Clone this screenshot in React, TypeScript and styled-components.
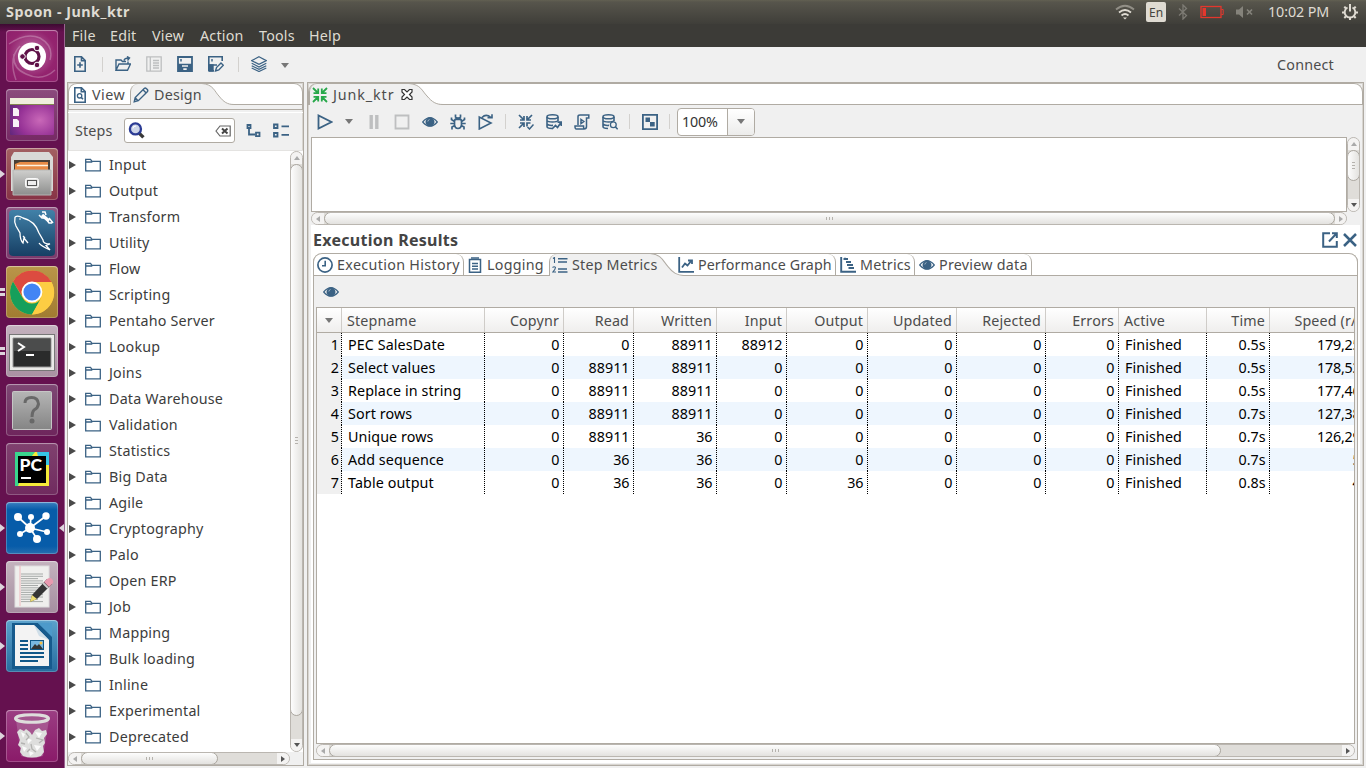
import React from "react";
import styled, { createGlobalStyle, css } from "styled-components";

const ink = "#3b6284";
const line = "#b0aba3";
const face = "#f0f0f0";

const Global = createGlobalStyle`
  *, *::before, *::after { box-sizing: border-box; }
  html, body { margin: 0; height: 100%; overflow: hidden; }
  body { font-family: "Noto Sans", "Open Sans", sans-serif; font-size: 14.3px; line-height: 20px; color: #4c4c4c; background: ${face}; }
`;

const Desktop = styled.div`
  width: 1366px; height: 768px; display: flex; flex-direction: column; overflow: hidden; white-space: nowrap;
`;
const TopBar = styled.header`
  height: 24px; flex: none; display: flex; align-items: center; justify-content: space-between;
  padding: 0 8px 0 6px; color: #dfdbd2; background: linear-gradient(#626052 0, #57554c 2px, #3f3e39 100%);
`;
const Title = styled.div`font-size: 14.3px; font-weight: 700; letter-spacing: 0.52px;`;
const Indicators = styled.div`display: flex; align-items: center; height: 24px;`;
const Lang = styled.span`
  width: 20px; height: 20px; margin: 0 11px; border-radius: 2px; background: #dfdbd2; color: #44433d;
  font-size: 12px; line-height: 21px; text-align: center;
`;
const Clock = styled.span`margin: 0 12px 0 14px; letter-spacing: -0.1px; width: 62px;`;
const Body = styled.div`flex: 1; display: flex; min-height: 0;`;

const Launcher = styled.nav`
  width: 65px; flex: none; display: flex; flex-direction: column; gap: 7px; padding: 6px 0 6px 6px;
  background: linear-gradient(#3d0a32 0, #62104f00 8px), #65114f; border-right: 1px solid #9a6390;
`;
const Tile = styled.div<{ $bg: string; $bottom?: boolean; $marks?: number; $active?: boolean }>`
  position: relative; width: 52px; height: 52px; flex: none; border-radius: 4px; background: ${p => p.$bg};
  box-shadow: inset 0 0 0 1px rgba(255,255,255,.22), inset 0 1px 1px rgba(255,255,255,.3);
  margin-top: ${p => (p.$bottom ? "auto" : 0)};
  & > svg { display: block; width: 52px; height: 52px; }
  ${p => p.$marks === 1 && css`
    &::before { content: ""; position: absolute; left: -6px; top: 22px; border: 4px solid transparent; border-left: 5px solid #ddd5dc; border-right: 0; }
  `}
  ${p => p.$marks === 2 && css`
    &::before { content: ""; position: absolute; left: -6px; top: 22px; width: 5px; height: 8px; border: solid #ddd5dc; border-width: 3px 0; }
  `}
  ${p => p.$active && css`
    &::after { content: ""; position: absolute; right: -6px; top: 22px; border: 4px solid transparent; border-right: 5px solid #ddd5dc; border-left: 0; }
  `}
`;

const Window = styled.div`flex: 1; min-width: 0; display: flex; flex-direction: column; background: ${face};`;
const MenuBar = styled.div`
  height: 23px; flex: none; display: flex; gap: 15px; padding: 2px 0 0 7px; background: #3c3b37; color: #dfdbd2; letter-spacing: 0.2px;
`;
const MenuItem = styled.span<{ $w: number }>`width: ${p => p.$w}px;`;
const MainTools = styled.div`height: 35px; flex: none; display: flex; align-items: center; padding: 0 32px 1px 7px;`;
const Connect = styled.span`margin-left: auto; letter-spacing: 0.22px; padding-top: 1px;`;
const Sep = styled.i<{ $m?: string }>`width: 1px; height: 15px; margin: ${p => p.$m || "0 12px"}; background: #d3d1ce; flex: none;`;
const Caret = styled.i<{ $m?: string }>`
  border: 4px solid transparent; border-top: 5px solid #777; border-bottom: 0; margin: ${p => p.$m || 0}; flex: none;
`;
const Gap = styled.i<{ $w: number }>`width: ${p => p.$w}px; flex: none;`;
const Panels = styled.div`flex: 1; min-height: 0; display: flex; gap: 3px; padding: 0 2px 2px 2px;`;
const Pane = styled.section<{ $w?: number }>`
  ${p => (p.$w ? css`width: ${p.$w}px; flex: none;` : css`flex: 1; min-width: 0;`)}
  display: flex; flex-direction: column; border: 1px solid ${line}; box-shadow: inset 0 0 0 1px #d8d5d0; background: ${face};
`;
const Strip = styled.div<{ $h?: number }>`
  height: ${p => p.$h || 22}px; flex: none; display: flex; background: #fff; border: 1px solid ${line}; border-radius: 9px 9px 0 0; border-bottom: 0;
  box-shadow: inset 0 -1px 0 ${line};
`;
const Tab = styled.div<{ $w: number; $pl?: number; $gap?: number; $on?: boolean; $edge?: boolean; $track?: number }>`
  width: ${p => p.$w}px; padding-left: ${p => p.$pl ?? 4}px; gap: ${p => p.$gap ?? 4}px; letter-spacing: ${p => p.$track ?? 0.2}px;
  height: 100%; flex: none; display: flex; align-items: center; position: relative;
  & > span { position: relative; z-index: 1; }
  ${p => p.$on && css`background: ${face}; border-left: 1px solid ${line}; border-radius: 8px 0 0 0;`}
  ${p => p.$edge && css`border-right: 1px solid ${line}; border-radius: 0 8px 0 0;`}
`;
const SlopeSvg = styled.svg<{ $back?: number }>`flex: none; display: block; margin-right: ${p => -(p.$back || 0)}px;`;
const Slope = ({ back, w = 34, h = 21 }: { back?: number; w?: number; h?: number }) => (
  <SlopeSvg $back={back} width={w} height={h} viewBox="0 0 34 21" preserveAspectRatio="none">
    <path d="M0 0C12 1 13 7 18 12C23 18 27 20.5 34 20.5V21H0Z" fill={face} />
    <path d="M0 -.5C12 .5 13 7 18 12C23 18 27 20.5 34 20.5" fill="none" stroke={line} />
  </SlopeSvg>
);

const Band = styled.div`height: 5px; flex: none; border: solid ${line}; border-width: 0 1px 1px; margin-bottom: 2px;`;
const StepsBar = styled.div`
  height: 39px; flex: none; display: flex; align-items: center; padding: 0 0 2px 7px; border-top: 1px solid #fff; border-bottom: 1px solid #e4e3e1;
`;
const StepsLabel = styled.span`width: 38px; letter-spacing: 0.15px;`;
const Search = styled.div`
  width: 111px; height: 25px; margin: 0 11px 0 11px; padding: 0 3px 0 3px; display: flex; align-items: center; justify-content: space-between;
  background: #fff; border: 1px solid ${line}; border-radius: 3px;
`;
const TreeArea = styled.div`flex: 1; min-height: 0; display: flex; background: #fff;`;
const Tree = styled.ul`list-style: none; margin: 0; padding: 1px 0 0; flex: 1; min-width: 0; overflow: hidden;`;
const TreeRow = styled.li`height: 26px; display: flex; align-items: center; color: #3c3c3c; letter-spacing: 0.2px;`;
const Twist = styled.i`border: 4px solid transparent; border-left: 7px solid #4a4a4a; border-right: 0; margin-left: 1px;`;
const Foot = styled.div`height: 13px; flex: none; display: flex; background: ${face}; padding-right: 13px;`;

const ScrollBox = styled.div<{ $v?: boolean }>`
  display: flex; flex: ${p => (p.$v ? "none" : 1)}; ${p => (p.$v ? css`width: 13px; flex-direction: column;` : css`height: 13px;`)}
  background: #dfddd9; border: 1px solid #bab6b0; border-radius: 7px; overflow: hidden;
`;
const Cap = styled.i<{ $v?: boolean; $dim?: boolean; $dir: string }>`
  flex: none; width: ${p => (p.$v ? 11 : 12)}px; height: ${p => (p.$v ? 12 : 11)}px; background: #f4f3f2;
  display: flex; align-items: center; justify-content: center;
  &::after {
    content: ""; border: 3px solid transparent;
    ${p => `border-${p.$dir}: 4px solid ${p.$dim ? "#aaa" : "#555"}; border-${({ left: "right", right: "left", top: "bottom", bottom: "top" } as Record<string, string>)[p.$dir]}: 0;`}
  }
`;
const Thumb = styled.i<{ $v?: boolean; $len: number }>`
  flex: none; display: flex; align-items: center; justify-content: center; border: 1px solid #aaa69f; border-radius: 7px;
  ${p => p.$v
    ? css`width: 13px; margin-left: -1px; height: ${p.$len}px; background: linear-gradient(90deg, #fdfdfd, #e3e2df);`
    : css`height: 13px; margin-top: -1px; width: ${p.$len}px; background: linear-gradient(#fdfdfd, #e3e2df);`}
  &::after {
    content: ""; ${p => (p.$v ? css`width: 3px; height: 7px;` : css`width: 7px; height: 3px;`)}
    background: repeating-linear-gradient(${p => (p.$v ? "180deg" : "90deg")}, #b5b2ad 0 1px, transparent 1px 3px);
  }
`;
const Space = styled.i`flex: 1;`;
const Scroll = ({ v, len, dimEnd }: { v?: boolean; len: number; dimEnd?: boolean }) => (
  <ScrollBox $v={v}>
    <Cap $v={v} $dim $dir={v ? "bottom" : "right"} />
    <Thumb $v={v} $len={len} />
    <Space />
    <Cap $v={v} $dim={dimEnd} $dir={v ? "top" : "left"} />
  </ScrollBox>
);

const EditTools = styled.div`height: 32px; flex: none; display: flex; align-items: center; padding: 1px 0 0 9px;`;
const Combo = styled.div`
  display: flex; width: 78px; height: 28px; border: 1px solid ${line}; border-radius: 4px; background: #fff; color: #333; overflow: hidden;
  & > span { width: 50px; padding: 3px 0 0 4px; border-right: 1px solid ${line}; letter-spacing: -0.2px; }
`;
const ComboButton = styled.div`flex: 1; display: flex; align-items: center; justify-content: center; background: linear-gradient(#fff, #ececeb);`;
const CanvasRow = styled.div`display: flex; height: 75px; flex: none; padding: 0 3px 0 3px;`;
const Canvas = styled.div`flex: 1; background: #fff; border: 1px solid ${line};`;
const CanvasFoot = styled.div`display: flex; height: 13px; flex: none; padding: 0 16px 0 3px;`;
const Results = styled.div`flex: 1; min-height: 0; margin: 0 3px 2px 3px; padding: 0 2px 3px; background: #fff; display: flex; flex-direction: column;`;
const ResultsHead = styled.div`height: 28px; flex: none; display: flex; align-items: center; padding-top: 2px;`;
const Heading = styled.h2`margin: 0; font-size: 16px; font-weight: 700; color: #444; flex: 1; letter-spacing: 0.28px;`;
const Folder = styled.div`flex: 1; min-height: 0; display: flex; flex-direction: column; background: ${face}; border: 1px solid ${line}; border-top: 0; border-radius: 9px 9px 0 0;`;
const FolderStrip = styled(Strip)`margin: 0 -1px;`;
const ResultTools = styled.div`height: 31px; flex: none; padding: 8px 0 0 9px;`;
const TableBox = styled.div`flex: 1; min-height: 0; margin: 0 2px 0 2px; display: flex; flex-direction: column; overflow: hidden; border: 1px solid ${line}; border-bottom: 0; background: #fff;`;
const cols = "25px 143px 79px 70px 83px 70px 81px 89px 89px 73px 88px 63px 103px";
const HeadRow = styled.div`
  display: grid; grid-template-columns: ${cols}; height: 25px; flex: none; background: linear-gradient(#fff, #efeeed); border-bottom: 1px solid ${line};
`;
const HeadCell = styled.div<{ $left?: boolean }>`
  border-right: 1px solid #cfccc8; padding: 3px 4px 0 5px; text-align: ${p => (p.$left ? "left" : "right")}; letter-spacing: 0.15px;
`;
const Sorter = styled.div`display: flex; align-items: center; justify-content: center; border-right: 1px solid #cfccc8;`;
const Row = styled.div<{ $alt: boolean }>`
  display: grid; grid-template-columns: ${cols}; height: 23px; flex: none; background: ${p => (p.$alt ? "#eef6fe" : "#fff")}; color: #000;
`;
const Cell = styled.div<{ $left?: boolean; $no?: boolean }>`
  padding: 2px 4.5px 0 6px; text-align: ${p => (p.$left ? "left" : "right")}; letter-spacing: ${p => (p.$left ? 0.1 : 0)}px;
  ${p => p.$no && css`background-color: #f0f0f0; padding-right: 3px;`}
  background-image: repeating-linear-gradient(#000 0 1px, transparent 1px 2px); background-size: 1px 100%; background-position: right; background-repeat: no-repeat;
  &:last-child { letter-spacing: -0.2px; }
`;
const TableFoot = styled.div`height: 16px; flex: none; display: flex; background: ${face}; margin: 0 2px; padding-bottom: 2px; border-top: 1px solid ${line};`;

const Glyph = styled.svg`flex: none; display: block; fill: none; stroke: ${ink}; stroke-width: 1.6;`;
const Ico = ({ n, s = 16 }: { n: string; s?: number }) => (
  <Glyph width={s} height={s} viewBox="0 0 16 16">{icons[n]}</Glyph>
);
const dbTop = <><ellipse cx="6.5" cy="2.8" rx="5.5" ry="2" /><path d="M1 3V12.5C1 14 4 14.5 6 14.5M12 3V7M1 6.5C2 8.5 11 8.5 12 6.5M1 10C2 11.4 5 11.6 7 11.4" /></>;
const icons: Record<string, React.ReactNode> = {
  file: <path d="M2.8 .8H9.5L13.2 4.5V15.2H2.8ZM9.5 1V4.8H13M8 6.2V11.8M5.2 9H10.8" />,
  fileSearch: <><path d="M2.8 .8H9.5L13.2 4.5V15.2H2.8ZM9.3 1V4.8H13" /><circle cx="7.6" cy="8.8" r="2.2" strokeWidth="1.3" /><path d="M9.2 10.4L11 12.2" /></>,
  open: <path d="M1 14V4H6L7.5 5.5H11M1 14.2L4 8H15.5L12.5 14.2ZM13 7.5V5.5M9 4.5Q9.5 2 14 2M12 .5L14.5 2L12.5 4.5" strokeWidth="1.4" />,
  list: <g stroke="#bdbfc0"><path d="M.8 .8H15.2V15.2H.8ZM4.3 1V15M7 4.5H13M7 7H13M7 9.5H13M7 12H13" strokeWidth="1.3" /></g>,
  save: <><path d="M1 1H15V15H1Z" strokeWidth="1.8" /><path d="M1 8.5H15M5.5 15V11.5H10.5V15" strokeWidth="1.6" /><path d="M4 3V5.5" strokeWidth="1.5" /><path d="M1 9H5V15H1ZM11 9H15V15H11Z" fill={ink} stroke="none" /></>,
  saveEdit: <><path d="M14.2 5V.8H.8V14.8H6M1 9H9" /><path d="M4 3V5.5M1 9H5V15H1" fill={ink} strokeWidth="1.4" /><path d="M7.5 15L8.5 11.5L13 7L15.3 9.2L10.8 14Z" strokeWidth="1.4" /></>,
  layers: <g strokeWidth="1.2"><path d="M8 .8L15.3 4.6L8 8.4L.7 4.6ZM.7 7.2L8 11L15.3 7.2M.7 9.8L8 13.4L15.3 9.8M.7 12L8 15.5L15.3 12" /></g>,
  pencil: <path d="M1.2 14.8L2.2 10.5L11.2 1.5Q12.3 .6 13.5 1.7L14.3 2.5Q15.3 3.8 14.3 4.8L5.3 13.7ZM2.2 10.8L5 13.7M10 2.8L13.2 6" strokeWidth="1.4" />,
  folder: <path d="M.7 13.8V2.3H5.5L7 4.3H15.3V13.8ZM1 5H7.3" strokeWidth="1.3" />,
  tree: <path d="M1.5 2H4.5V5H1.5ZM3 5V11.5H9M10 9.7H13.5V13.2H10Z" strokeWidth="1.8" />,
  rows: <path d="M1 1.5H4.5V5H1ZM1 10H4.5V13.5H1ZM8.5 3.3H16M8.5 11.8H16" strokeWidth="1.8" />,
  play: <path d="M1.5 1.5V14.5L14.5 8Z" strokeWidth="1.8" />,
  pause: <path d="M5.2 1V15M10.8 1V15" stroke="#bebfc0" strokeWidth="3.4" />,
  stop: <path d="M1.5 1.5H14.5V14.5H1.5Z" stroke="#bebfc0" strokeWidth="1.8" />,
  eye: <><path d="M.7 8Q8 -.8 15.3 8Q8 16.5 .7 8Z" strokeWidth="1.2" /><circle cx="8" cy="7.9" r="3.7" fill={ink} /><path d="M5.8 7.5Q6.2 5.8 7.5 5.5" stroke="#b6c7d4" strokeWidth=".8" /></>,
  bug: <path d="M4.5 7Q5 4 8 4T11.5 7V11Q11 14.5 8 14.5T4.5 11ZM5 5.5H11M5.5 .5V3L7 4M10.5 .5V3L9 4M4.5 7.5L1.5 5.5V3.5M11.5 7.5L14.5 5.5V3.5M4.5 9.5H.3M11.5 9.5H15.7M4.7 11.5L2 13V15.5M11.3 11.5L14 13V15.5" strokeWidth="1.7" />,
  replay: <path d="M1.3 3V15L13 9ZM4 3.5Q8 -.8 13 3.5M9.5 3.8H14V.3" strokeWidth="1.6" />,
  check: <><path d="M1 1L5.5 5.5M6 2V6H2M14 1L9.5 5.5M9 2V6H13M1 14L5.5 9.5M2 9H6V13M12.5 9H9V12.5" strokeWidth="1.7" /><path d="M9.5 13L11.5 15L15.5 10.5" strokeWidth="1.5" /></>,
  db: <>{dbTop}<path d="M6 15L9.5 11.5L11.5 13.5L15 8.5M11.5 8.2H15.3V12" strokeWidth="1.7" /></>,
  dbSearch: <>{dbTop}<circle cx="11.3" cy="10.8" r="2.9" strokeWidth="1.3" /><path d="M13.5 13L15.7 15.3" /></>,
  script: <path d="M4 11V2.5Q4 1 6 1H14.8V4H12.5V12.5Q12.5 15 10 15H2.5Q.8 15 1 12H9.5Q9.5 15 11 15M7 5.5V9.5L9.8 7.5Z" strokeWidth="1.5" />,
  grid: <><path d="M.9 .9H15.1V15.1H.9Z" strokeWidth="1.8" /><path d="M3.5 3.5H8V8H3.5ZM8 8H12.7V12.5H8Z" fill={ink} stroke="none" /></>,
  inward: <path d="M1 1L6 6M6.2 1.5V6.2H1.5M15 1L10 6M9.8 1.5V6.2H14.5M1 15L6 10M1.5 9.8H6.2V14.5M15 15L10 10M14.5 9.8H9.8V14.5" stroke="#27a84a" strokeWidth="1.8" />,
  closeTab: <path d="M3 2.5H5.5L8 5L10.5 2.5H13V5L10.5 7.5L13 10V12.5H10.5L8 10L5.5 12.5H3V10L5.5 7.5L3 5Z" fill="#fff" stroke="#333" strokeWidth="1.2" />,
  popOut: <path d="M8 1.2H1.2V14.8H14.8V9M7 9.5L14.5 1.5M10 1.2H14.8V6" strokeWidth="2" />,
  close: <path d="M2 2L14 14M14 2L2 14" strokeWidth="2.5" />,
  clock: <><circle cx="8" cy="8" r="7.1" strokeWidth="1.7" /><path d="M8.2 3.8V8.8H5" /></>,
  note: <path d="M2.5 2.5H13.5V15.2H2.5ZM5 0V3M7 0V3M9 0V3M11 0V3M5 6.5H11M5 9.2H11M5 12H11" strokeWidth="1.5" />,
  steps: <><path d="M6 1.7H15.5M6 5H15M6 12H15M6 15H15.5" strokeWidth="1.6" /><path d="M1 1.5L2.5 .5V6M.5 10.5Q2.5 9 3.5 10.5Q3.5 12 .8 15H4" strokeWidth="1.1" /></>,
  graph: <path d="M1.2 0V14.8H16M4 10.5L7 6.5L9.5 8.5L13.5 3.5M10 3.5H14V7" strokeWidth="1.8" />,
  gantt: <path d="M1.2 0V14.8H16M3.5 2H8M6 5H11M7 8H13M8.5 11H14M5 .8V3" strokeWidth="1.9" />,
  lens: <><path d="M10 10L14.5 14.5" stroke="#383838" strokeWidth="3.2" /><circle cx="7" cy="6.5" r="5.2" fill="#cdd5e8" stroke="#2b3b94" strokeWidth="2.2" /><path d="M4.5 6Q5 4 7.5 3.8" stroke="#fff" strokeWidth="1" /></>,
  clear: <><path d="M1 8L5 3H15.2V13H5Z" stroke="#666" strokeWidth="1.2" /><path d="M7 5.5L12.5 10.5M12.5 5.5L7 10.5" stroke="#444" strokeWidth="2" /></>,
};

const A = ({ children }: { children: React.ReactNode }) => <svg viewBox="0 0 52 52">{children}</svg>;
const FileLines = ({ x, y, w, n, g, c }: { x: number; y: number; w: number; n: number; g: number; c: string }) => (
  <path d={Array.from({ length: n }, (_, i) => `M${x} ${y + i * g}h${w - (i % 3 === 2 ? 5 : 0)}`).join("")} stroke={c} strokeWidth="1" />
);

const dock: { bg: string; marks?: number; active?: boolean; art: React.ReactNode }[] = [
  { bg: "radial-gradient(circle at 50% 45%, #c077aa, #94246f 60%, #8c1d6a)", art: <A>
    <g fill="none" stroke="#fff" strokeOpacity=".25" strokeWidth="1.5"><path d="M3 14Q20 2 34 8Q48 16 44 30M10 50Q2 28 14 16M49 40Q36 52 20 44Q6 38 8 24" /></g>
    <circle cx="26" cy="26.5" r="14" fill="#fff" /><circle cx="26" cy="26.5" r="7" fill="none" stroke="#5f1148" strokeWidth="3.2" />
    <g fill="#5f1148" stroke="#fff" strokeWidth="1"><circle cx="16.5" cy="26.5" r="2.8" /><circle cx="31" cy="18" r="2.8" /><circle cx="31" cy="35" r="2.8" /></g></A> },
  { bg: "linear-gradient(#8b4b7d, #762964)", art: <A>
    <defs><radialGradient id="wall" cx=".68" cy=".6" r=".8"><stop stopColor="#c968b8" /><stop offset=".6" stopColor="#963296" /><stop offset="1" stopColor="#5d2679" /></radialGradient></defs>
    <rect x="4" y="9" width="44" height="37" rx="1.5" fill="url(#wall)" /><path d="M4 9H48V15H4Z" fill="#efeedd" /><path d="M4 15.5H48" stroke="#83854f" />
    <path d="M7 19h4l2 2v6H7ZM7 30h4l2 2v6H7Z" fill="#f7f0f7" /></A> },
  { bg: "linear-gradient(#a36062, #873346)", marks: 1, art: <A>
    <path d="M8 4H43L47 9V43H5V9Z" fill="#d9d9d7" /><path d="M8 12H44V24H8Z" fill="#4a4037" /><path d="M9 16L14 14H42V24H9Z" fill="#e88b45" /><path d="M11 17.5H42" stroke="#fff3df" strokeWidth="1.5" />
    <defs><linearGradient id="drawer" x2="0" y2="1"><stop stopColor="#cfcfcd" /><stop offset="1" stopColor="#8d8e8d" /></linearGradient></defs>
    <path d="M7 22H45V47H7Z" fill="url(#drawer)" stroke="#b5b5b3" /><rect x="19.5" y="30.5" width="13" height="9" rx="2" fill="#e6e6e4" stroke="#fafafa" /><rect x="21.5" y="32.5" width="9" height="5" fill="#eee" stroke="#555" /></A> },
  { bg: "linear-gradient(#905a85, #7b3a6c)", art: <A>
    <defs><linearGradient id="sea" x2="0" y2="1"><stop stopColor="#4181a8" /><stop offset="1" stopColor="#173f64" /></linearGradient></defs>
    <rect x="3" y="3" width="46" height="46" rx="4" fill="url(#sea)" />
    <path d="M9 10Q12 8 17 11Q29 14 33 26L37 33Q37 37 44 37L40 38.5L44 43Q35 39 33 36M9 10Q8 15 10 19L14 26Q14 33 17 36L18 31L22 36M19 31Q18 30 17 29" fill="none" stroke="#fff" strokeWidth="1.3" /><circle cx="14" cy="12" r=".8" fill="#fff" />
    <path d="M36 8L43 14" stroke="#fff" strokeWidth="3.4" fill="none" /><path d="M33 8L36 11H39M36 5H39L40 8M41 13L43 16H46M43 11L47 16" stroke="#fff" strokeWidth="1.5" fill="none" /></A> },
  { bg: "linear-gradient(#ba9549, #a17c31)", marks: 2, art: <A>
    <circle cx="26" cy="26.5" r="22" fill="#fcc934" /><path d="M7 15.5A22 22 0 0 1 45.5 16H26A10.5 10.5 0 0 0 16.5 31Z" fill="#dc4b40" /><path d="M7 15.5A22 22 0 0 0 26 48.5L35.5 31.5A10.5 10.5 0 0 1 16.5 31.5Z" fill="#169f5b" />
    <path d="M26 48.5A22 22 0 0 0 45.5 16H26A10.5 10.5 0 0 1 35.5 31.5Z" fill="#fdcd43" /><circle cx="26" cy="26" r="9.5" fill="#4285f4" stroke="#fff" strokeWidth="1.8" /></A> },
  { bg: "linear-gradient(#c3b1bd, #a991a2)", marks: 2, art: <A>
    <rect x="3.5" y="9.5" width="45" height="36" fill="#eaeae8" stroke="#777" /><path d="M7 13H45V42H7Z" fill="#2a2b2b" stroke="#999" /><path d="M8 14H44V26H8Z" fill="#4b4c4c" /><path d="M12 18L18 22L12 26" fill="none" stroke="#fff" strokeWidth="2" /><path d="M20 30H28" stroke="#fff" strokeWidth="2" /></A> },
  { bg: "linear-gradient(#7e4874, #6e255c)", art: <A>
    <defs><linearGradient id="gray" x2="0" y2="1"><stop stopColor="#b5b5b5" /><stop offset="1" stopColor="#858585" /></linearGradient></defs>
    <rect x="6.5" y="7.5" width="39" height="38" rx="1" fill="url(#gray)" stroke="#c6c6c6" /><path d="M19 19Q19 13.5 25.5 13.5T32.5 20Q32 24 28 26Q26 28 26 33" fill="none" stroke="#686868" strokeWidth="3" /><circle cx="26" cy="37" r="2.5" fill="#686868" /></A> },
  { bg: "linear-gradient(#80416f, #702b5f)", art: <A>
    <path d="M9 9H43V43H9Z" fill="#f5ea39" /><path d="M9 9H29L22 18L12 43H9Z" fill="#39d68e" /><path d="M31 9H43V22H34Z" fill="#35c4e5" /><path d="M12 13H40V40H12Z" fill="#000" />
    <text x="13.5" y="28" fontFamily="Lato" fontSize="17.5" fontWeight="900" fill="#fff">PC</text><path d="M15 35H25" stroke="#fff" strokeWidth="2" /></A> },
  { bg: "linear-gradient(#3c80c0, #075ca9 15%, #075ca9 85%, #286eaf)", marks: 1, active: true, art: <A>
    <path d="M24 26L12 15M24 26L25 15M24 26L40 14M24 26L41 30M24 26L31 37M24 26L14 32" stroke="#fff" strokeWidth="1.7" />
    <g fill="#fff"><circle cx="24" cy="26" r="5" /><circle cx="12" cy="15" r="4" /><circle cx="25" cy="15" r="3" /><circle cx="40" cy="14" r="3.7" /><circle cx="41" cy="30" r="3" /><circle cx="31" cy="37" r="4" /><circle cx="14" cy="32" r="3" /></g></A> },
  { bg: "linear-gradient(#c4b3be, #a58ea0)", marks: 1, art: <A>
    <rect x="9" y="5" width="34" height="41" fill="#efefed" stroke="#ddd" /><path d="M14 5V45" stroke="#f0a3aa" strokeWidth=".7" /><FileLines x={15} y={13} w={22} n={13} g={2.3} c="#a6aaa8" />
    <path d="M24 41L26 34L41 18L46 23L31 38Z" fill="#353535" /><path d="M24 41L26 34L31 38Z" fill="#eddd72" /><path d="M38 21L41 18Q44 16 46 18T47 22L43 26Z" fill="#e99ab0" /><path d="M37 22L42 27" stroke="#ccc" strokeWidth="2" /></A> },
  { bg: "linear-gradient(#5ba2cc, #276c9e)", marks: 1, art: <A>
    <path d="M6 3H32L46 16V49H6Z" fill="#165a8c" /><path d="M32 3H46V17Z" fill="#4d9aca" /><path d="M9 5H28L43 20V46H9Z" fill="#f3f3f3" /><path d="M28 5L43 20L33 16Z" fill="#cfdee8" />
    <path d="M14 21H22M14 25H22M14 29H22M14 33H38M14 37H38M14 41H32" stroke="#105788" strokeWidth="1.8" /><rect x="24.5" y="20.5" width="13" height="9" fill="#79b6df" stroke="#105788" /><path d="M25 29L29 24L31 26L33 24L37 29Z" fill="#333" /><circle cx="35" cy="23" r="1.5" fill="#f6be46" /></A> },
];

const TrashArt = () => <A>
  <path d="M10 10L15 46Q26 50 37 46L43 10Z" fill="#b57aa5" fillOpacity=".5" />
  <path d="M11 22L14 19L18 21L20 19L24 22L26 25L29 20L33 18L36 21L40 20L41 24L38 28L39 33L37 36L38 42L35 46Q26 49 17 46L14 42L15 38L12 35L14 30Z" fill="#dededd" />
  <path d="M15 22L19 24L17 28ZM29 22L36 23L33 28ZM21 28L26 30L22 34ZM16 36L21 38L18 42ZM28 35L35 36L31 41ZM23 41L28 43L24 46Z" fill="#fafafa" />
  <path d="M20 23L23 27L20 30M30 28L37 30L33 33M15 33L19 34M25 34L26 39L30 42M21 42L24 39" stroke="#b3b3b1" strokeWidth="1.3" fill="none" />
  <ellipse cx="26" cy="8.5" rx="16.5" ry="3.8" fill="#a3568e" stroke="#dededc" strokeWidth="3" /></A>;

const steps = ["Input", "Output", "Transform", "Utility", "Flow", "Scripting", "Pentaho Server", "Lookup", "Joins", "Data Warehouse", "Validation", "Statistics", "Big Data", "Agile", "Cryptography", "Palo", "Open ERP", "Job", "Mapping", "Bulk loading", "Inline", "Experimental", "Deprecated"];
const heads = ["Stepname", "Copynr", "Read", "Written", "Input", "Output", "Updated", "Rejected", "Errors", "Active", "Time", "Speed (r/s)"];
const data = [
  ["PEC SalesDate", 0, 0, 88911, 88912, 0, 0, 0, 0, "Finished", "0.5s", "179,258"],
  ["Select values", 0, 88911, 88911, 0, 0, 0, 0, 0, "Finished", "0.5s", "178,537"],
  ["Replace in string", 0, 88911, 88911, 0, 0, 0, 0, 0, "Finished", "0.5s", "177,467"],
  ["Sort rows", 0, 88911, 88911, 0, 0, 0, 0, 0, "Finished", "0.7s", "127,380"],
  ["Unique rows", 0, 88911, 36, 0, 0, 0, 0, 0, "Finished", "0.7s", "126,293"],
  ["Add sequence", 0, 36, 36, 0, 0, 0, 0, 0, "Finished", "0.7s", "51"],
  ["Table output", 0, 36, 36, 0, 36, 0, 0, 0, "Finished", "0.8s", "45"],
];

const Tray = () => (
  <Indicators>
    <svg width="20" height="16" viewBox="0 0 20 16" fill="none" stroke="#dfdbd2" strokeWidth="1.8"><path d="M1 5.5Q10 -2 19 5.5" strokeOpacity=".45" /><path d="M4 8.5Q10 3.5 16 8.5M6.5 11.5Q10 8.5 13.5 11.5" /><path d="M8 13.5H12L10 15.5Z" fill="#dfdbd2" stroke="none" /></svg>
    <Lang>En</Lang>
    <svg width="12" height="16" viewBox="0 0 12 16" fill="none" stroke="#7d7b74" strokeWidth="1.3"><path d="M2 4.5L9.5 11.5L6 15V1L9.5 4.5L2 11.5" /></svg>
    <Gap $w={11} />
    <svg width="24" height="14" viewBox="0 0 24 14"><rect x="1" y="1.5" width="20" height="11" fill="none" stroke="#e3372d" strokeWidth="1.3" /><path d="M2.5 3H6V11H2.5Z" fill="#e3372d" /><path d="M21.5 4.5H23.2V9.5H21.5" fill="none" stroke="#e3372d" /></svg>
    <Gap $w={12} />
    <svg width="18" height="12" viewBox="0 0 18 12"><path d="M0 3.5H3L7 0V12L3 8.5H0Z" fill="#85837b" /><path d="M11 3.5L16 8.5M16 3.5L11 8.5" stroke="#85837b" strokeWidth="1.7" /></svg>
    <Clock>10:02 PM</Clock>
    <svg width="16" height="16" viewBox="0 0 16 16" fill="none" stroke="#dfdbd2"><path d="M5.5 3.5A5.3 5.3 0 1 0 10.5 3.5" strokeWidth="1.9" /><path d="M8 0V7.5" strokeWidth="2" /><path d="M2.3 2.6L4 4.5M13.7 2.6L12 4.5M0 8.5H2.5M13.5 8.5H16M2.3 14L4 12.3M13.7 14L12 12.3M8 13.5V16" strokeWidth="2" /></svg>
  </Indicators>
);

export default function App() {
  return (
    <Desktop>
      <Global />
      <TopBar><Title>Spoon - Junk_ktr</Title><Tray /></TopBar>
      <Body>
        <Launcher>
          {dock.map((d, i) => <Tile key={i} $bg={d.bg} $marks={d.marks} $active={d.active}>{d.art}</Tile>)}
          <Tile $bg="linear-gradient(#9b3e83, #8a1a69)" $bottom $marks={1}><TrashArt /></Tile>
        </Launcher>
        <Window>
          <MenuBar>
            <MenuItem $w={23}>File</MenuItem><MenuItem $w={27}>Edit</MenuItem><MenuItem $w={33}>View</MenuItem>
            <MenuItem $w={44}>Action</MenuItem><MenuItem $w={35}>Tools</MenuItem><MenuItem $w={32}>Help</MenuItem>
          </MenuBar>
          <MainTools>
            <Ico n="file" /><Sep $m="0 12px 0 14px" /><Ico n="open" /><Gap $w={15} /><Ico n="list" /><Gap $w={15} /><Ico n="save" /><Gap $w={15} /><Ico n="saveEdit" />
            <Sep $m="0 12px 0 14px" /><Ico n="layers" /><Caret $m="2px 0 0 14px" />
            <Connect>Connect</Connect>
          </MainTools>
          <Panels>
            <Pane $w={237}>
              <Strip>
                <Tab $w={61} $pl={3} $gap={4} $track={0.5}><Ico n="fileSearch" /><span>View</span></Tab>
                <Tab $w={72} $on $pl={2} $gap={5}><Ico n="pencil" /><span>Design</span></Tab>
                <Slope w={32} />
              </Strip>
              <Band />
              <StepsBar>
                <StepsLabel>Steps</StepsLabel>
                <Search><Ico n="lens" s={17} /><Ico n="clear" /></Search>
                <Ico n="tree" /><Gap $w={11} /><Ico n="rows" />
              </StepsBar>
              <TreeArea>
                <Tree>
                  {steps.map(s => <TreeRow key={s}><Twist /><Gap $w={9} /><Ico n="folder" /><Gap $w={8} />{s}</TreeRow>)}
                </Tree>
                <Scroll v len={552} />
              </TreeArea>
              <Foot><Scroll len={137} /></Foot>
            </Pane>
            <Pane>
              <Strip>
                <Tab $w={100} $on $pl={2} $gap={5} $track={0.9}><Ico n="inward" /><span>Junk_ktr</span><Ico n="closeTab" /></Tab>
                <Slope w={34} />
              </Strip>
              <EditTools>
                <Ico n="play" /><Caret $m="0 0 0 12px" /><Gap $w={13} /><Ico n="pause" /><Gap $w={12} /><Ico n="stop" /><Gap $w={12} /><Ico n="eye" /><Gap $w={12} /><Ico n="bug" /><Gap $w={12} /><Ico n="replay" />
                <Sep $m="0 12px 0 11px" /><Ico n="check" /><Gap $w={12} /><Ico n="db" /><Gap $w={12} /><Ico n="script" /><Gap $w={12} /><Ico n="dbSearch" />
                <Sep $m="0 12px 0 11px" /><Ico n="grid" /><Sep $m="0 7px 0 11px" />
                <Combo><span>100%</span><ComboButton><Caret /></ComboButton></Combo>
              </EditTools>
              <CanvasRow><Canvas /><Scroll v len={31} /></CanvasRow>
              <CanvasFoot><Scroll len={1011} dimEnd /></CanvasFoot>
              <Results>
                <ResultsHead><Heading>Execution Results</Heading><Ico n="popOut" /><Gap $w={4} /><Ico n="close" /></ResultsHead>
                <Folder>
                  <FolderStrip $h={23}>
                    <Tab $w={150} $edge $pl={3} $track={0.33}><Ico n="clock" /><span>Execution History</span></Tab>
                    <Tab $w={85} $pl={3} $track={0.25}><Ico n="note" /><span>Logging</span></Tab>
                    <Tab $w={101} $on $pl={2}><Ico n="steps" /><span>Step Metrics</span></Tab>
                    <Slope back={10} h={22} />
                    <Tab $w={162} $edge $pl={4} $track={0.06}><Ico n="graph" /><span>Performance Graph</span></Tab>
                    <Tab $w={79} $edge><Ico n="gantt" /><span>Metrics</span></Tab>
                    <Tab $w={117} $edge $track={0.25}><Ico n="eye" /><span>Preview data</span></Tab>
                  </FolderStrip>
                  <ResultTools><Ico n="eye" /></ResultTools>
                  <TableBox>
                    <HeadRow>
                      <Sorter><Caret /></Sorter>
                      {heads.map(h => <HeadCell key={h} $left={h === "Stepname" || h === "Active"}>{h}</HeadCell>)}
                    </HeadRow>
                    {data.map((r, i) => (
                      <Row key={i} $alt={i % 2 === 1}>
                        <Cell $no>{i + 1}</Cell>
                        {r.map((c, j) => <Cell key={j} $left={j === 0 || j === 9}>{c}</Cell>)}
                      </Row>
                    ))}
                  </TableBox>
                  <TableFoot><Scroll len={892} /></TableFoot>
                </Folder>
              </Results>
            </Pane>
          </Panels>
        </Window>
      </Body>
    </Desktop>
  );
}
